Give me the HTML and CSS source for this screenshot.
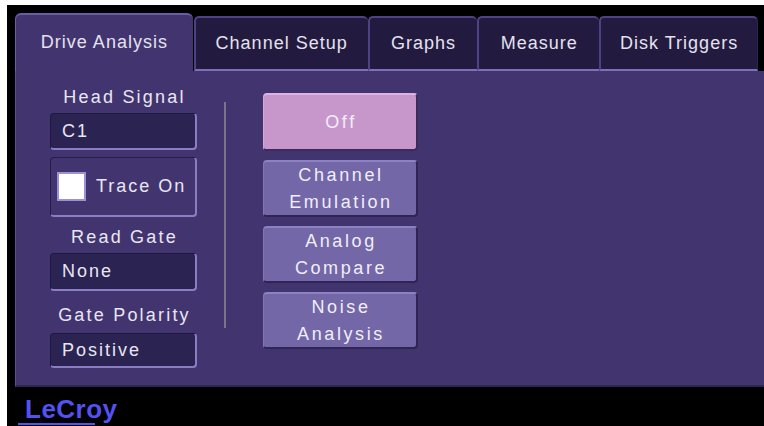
FILE: index.html
```html
<!DOCTYPE html>
<html>
<head>
<meta charset="utf-8">
<link rel="stylesheet" href="styles.css">
</head>
<body>
<div class="screen">
  <div class="tabs">
    <div class="tab active w1">Drive Analysis</div>
    <div class="tab w2">Channel Setup</div>
    <div class="tab w3">Graphs</div>
    <div class="tab w4">Measure</div>
    <div class="tab w5">Disk Triggers</div>
  </div>
  <div class="panel">
    <div class="left">
      <div class="label">Head Signal</div>
      <div class="field f1">C1</div>
      <div class="trace"><span class="check"></span><span>Trace On</span></div>
      <div class="label l2">Read Gate</div>
      <div class="field f2">None</div>
      <div class="label l3">Gate Polarity</div>
      <div class="field f3">Positive</div>
    </div>
    <div class="divider"></div>
    <div class="buttons">
      <div class="btn on">Off</div>
      <div class="btn">Channel<br>Emulation</div>
      <div class="btn">Analog<br>Compare</div>
      <div class="btn">Noise<br>Analysis</div>
    </div>
  </div>
  <div class="footer"><span class="logo">LeCroy</span></div>
</div>
</body>
</html>
```
FILE: styles.css
```css
html, body {
  margin: 0;
  background: #ffffff;
}
body {
  font-family: "Liberation Sans", Arial, sans-serif;
  color: #e8e6f2;
}
.screen {
  margin: 5px 0 0 7px;
  width: 757px;
  height: 421px;
  box-sizing: border-box;
  background: #000;
  padding: 8px 0 0 8px;
  display: flex;
  flex-direction: column;
}
.tabs {
  display: flex;
  align-items: flex-end;
  height: 58px;
  width: 743px;
}
.tab {
  box-sizing: border-box;
  height: 55px;
  background: #221b3f;
  border-top: 2px solid #4e4184;
  border-left: 2px solid #4e4184;
  border-bottom: 2px solid #7d70b8;
  border-radius: 5px 5px 0 0;
  display: flex;
  align-items: center;
  justify-content: center;
  font-size: 18px;
  letter-spacing: 1px;
  padding-bottom: 1px;
  color: #e4e2ee;
}
.tab.active {
  height: 58px;
  background: #42356f;
  border-top: 2px solid #6a5ca6;
  border-left: 1px solid #6a5ca6;
  border-bottom: none;
  border-radius: 6px 6px 0 0;
  padding-bottom: 2px;
}
.w1 { width: 178px; }
.w2 { width: 174px; margin-left: 1px; }
.w3 { width: 110px; }
.w4 { width: 122px; }
.w5 { width: 159px; border-right: 1px solid #2c2450; }

.panel {
  box-sizing: border-box;
  height: 316px;
  background: #42356f;
  border-left: 1px solid #5d4f96;
  border-bottom: 2px solid #2f2555;
  display: flex;
  align-items: flex-start;
  padding-left: 34px;
}
.left {
  width: 147px;
  margin-top: 16px;
  display: flex;
  flex-direction: column;
}
.label {
  height: 20px;
  line-height: 20px;
  font-size: 18px;
  letter-spacing: 2.2px;
  text-align: center;
  padding-left: 2px;
}
.l2 { margin-top: 10px; }
.l3 { margin-top: 14px; }
.field {
  box-sizing: border-box;
  margin-top: 6px;
  height: 37px;
  background: #2b2452;
  border: 1px solid #1f1940;
  border-right: 2px solid #8a7dc4;
  border-bottom: 2px solid #8a7dc4;
  border-radius: 4px;
  font-size: 18px;
  letter-spacing: 2px;
  line-height: 34px;
  padding-left: 11px;
}
.f2 { height: 38px; line-height: 35px; }
.f3 { margin-top: 8px; height: 35px; line-height: 32px; }
.trace {
  box-sizing: border-box;
  margin-top: 7px;
  height: 60px;
  border: 1px solid #241d46;
  border-right: 2px solid #8a7dc4;
  border-bottom: 2px solid #8a7dc4;
  border-radius: 4px;
  display: flex;
  align-items: center;
  padding-left: 6px;
  font-size: 18px;
  letter-spacing: 2px;
}
.check {
  box-sizing: border-box;
  width: 29px;
  height: 29px;
  background: #fff;
  border: 2px solid #9c90d6;
  margin-right: 10px;
}
.divider {
  width: 2px;
  height: 226px;
  margin-top: 31px;
  margin-left: 27px;
  background: #7a7488;
}
.buttons {
  margin-top: 22px;
  margin-left: 37px;
  display: flex;
  flex-direction: column;
  gap: 9px;
}
.btn {
  box-sizing: border-box;
  width: 155px;
  height: 57px;
  background: #7367a8;
  border-top: 2px solid #8c81c2;
  border-left: 1px solid #8276b8;
  border-right: 2px solid #2e2555;
  border-bottom: 2px solid #2e2555;
  border-radius: 4px;
  display: flex;
  align-items: center;
  justify-content: center;
  text-align: center;
  font-size: 18px;
  line-height: 27px;
  letter-spacing: 2.6px;
  padding-left: 2px;
  color: #f0eef8;
}
.btn.on {
  height: 58px;
  background: #c797cc;
  border-top-color: #dcb3e0;
  border-left-color: #d3a8d8;
  border-right-color: #3a2d5c;
  border-bottom-color: #3a2d5c;
}
.footer {
  padding-top: 8px;
  padding-left: 3px;
}
.logo {
  display: inline-block;
  width: 70px;
  padding-left: 7px;
  white-space: nowrap;
  font-family: "Liberation Sans", Arial, sans-serif;
  font-weight: bold;
  font-size: 26px;
  line-height: 28px;
  letter-spacing: 0.5px;
  color: #5252f2;
  border-bottom: 2px solid #5252f2;
}
```
